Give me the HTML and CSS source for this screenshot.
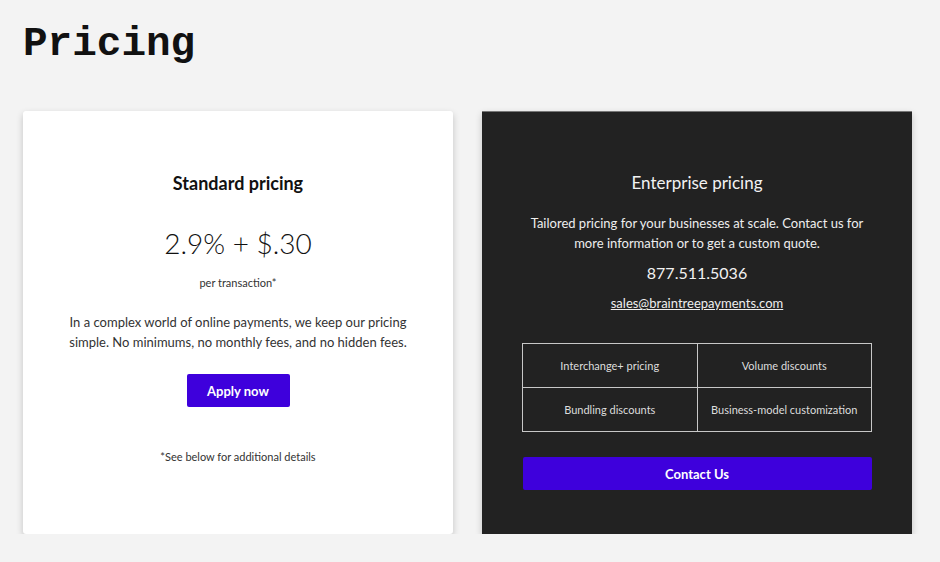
FILE: index.html
```html
<!DOCTYPE html>
<html>
<head>
<meta charset="utf-8">
<link rel="stylesheet" href="styles.css">
</head>
<body>
<main class="page">
  <h1 class="title">Pricing</h1>
  <div class="cards">
    <section class="card card-light">
      <h2 class="card-heading bold">Standard pricing</h2>
      <div class="price">2.9% + $.30</div>
      <div class="per">per transaction*</div>
      <p class="desc desc-light">In a complex world of online payments, we keep our pricing simple. No minimums, no monthly fees, and no hidden fees.</p>
      <a class="btn btn-apply" href="#">Apply now</a>
      <div class="note">*See below for additional details</div>
    </section>
    <section class="card card-dark">
      <h2 class="card-heading">Enterprise pricing</h2>
      <p class="desc desc-dark">Tailored pricing for your businesses at scale. Contact us for more information or to get a custom quote.</p>
      <div class="phone">877.511.5036</div>
      <a class="email" href="#">sales@braintreepayments.com</a>
      <div class="features">
        <div class="feature">Interchange+ pricing</div>
        <div class="feature">Volume discounts</div>
        <div class="feature">Bundling discounts</div>
        <div class="feature">Business-model customization</div>
      </div>
      <a class="btn btn-contact" href="#">Contact Us</a>
    </section>
  </div>
</main>
</body>
</html>
```
FILE: styles.css
```css
html, body {
  margin: 0;
  padding: 0;
  background: #f3f3f3;
}
body {
  font-family: "Lato", "Open Sans", sans-serif;
  color: #222;
}
.page {
  padding: 0 23px;
}
.title {
  margin: 0;
  padding-top: 20px;
  font-family: "Liberation Mono", "Courier New", monospace;
  font-size: 41px;
  line-height: 48px;
  font-weight: bold;
  color: #111;
}
.cards {
  display: flex;
  gap: 29px;
  margin-top: 43px;
}
.card {
  width: 430px;
  height: 423px;
  box-sizing: border-box;
  padding-top: 60px;
  display: flex;
  flex-direction: column;
  align-items: center;
  text-align: center;
  box-shadow: 0 3px 7px rgba(0,0,0,0.2);
}
.card-light {
  background: #fff;
  border-radius: 3px;
}
.card-dark {
  background: #222222;
  color: #f2f2f2;
  border-top: 1px solid #777;
  padding-top: 59px;
}
.card-heading {
  margin: 0;
  font-size: 17px;
  line-height: 24px;
  font-weight: normal;
}
.card-heading.bold {
  font-size: 18px;
  font-weight: bold;
  color: #111;
}
.price {
  margin-top: 30px;
  font-size: 28px;
  line-height: 36px;
  font-weight: 300;
  color: #111;
}
.per {
  margin-top: 14px;
  font-size: 11px;
  line-height: 16px;
  color: #333;
}
.desc {
  margin: 0;
  font-size: 13px;
  line-height: 20px;
}
.desc-light {
  margin-top: 21px;
  width: 340px;
  color: #333;
}
.desc-dark {
  margin-top: 18px;
  width: 340px;
  color: #eee;
}
.btn {
  display: flex;
  align-items: center;
  justify-content: center;
  height: 33px;
  box-sizing: border-box;
  background: #3e00dc;
  color: #fff;
  text-decoration: none;
  font-size: 13px;
  font-weight: bold;
  border-radius: 2px;
}
.btn-apply {
  margin-top: 22px;
  width: 103px;
}
.note {
  margin-top: 42px;
  font-size: 11px;
  line-height: 16px;
  color: #333;
}
.phone {
  margin-top: 9px;
  font-size: 16px;
  line-height: 22px;
  color: #f2f2f2;
}
.email {
  margin-top: 9px;
  font-size: 13px;
  line-height: 20px;
  color: #eee;
  text-decoration: underline;
}
.features {
  margin-top: 30px;
  width: 349px;
  display: grid;
  grid-template-columns: 1fr 1fr;
  border-top: 1px solid #c8c8c8;
  border-left: 1px solid #c8c8c8;
}
.feature {
  height: 43px;
  display: flex;
  align-items: center;
  justify-content: center;
  border-right: 1px solid #c8c8c8;
  border-bottom: 1px solid #c8c8c8;
  font-size: 11px;
  color: #ddd;
}
.btn-contact {
  margin-top: 25px;
  width: 349px;
}
```
